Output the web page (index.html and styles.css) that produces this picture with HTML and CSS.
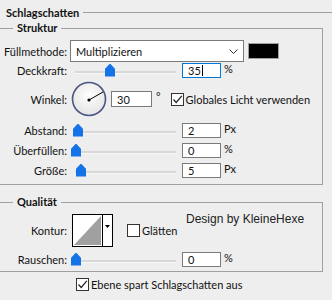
FILE: index.html
```
<!DOCTYPE html>
<html lang="de">
<head>
    <meta charset="UTF-8">
    <title>Schlagschatten</title>
    <link rel="stylesheet" href="styles.css">
</head>
<body>
    <div class="dialog">
        <div class="heading"><span>Schlagschatten</span></div>

        <fieldset class="group struktur">
            <legend>Struktur</legend>

            <div class="row row-mode">
                <span class="lbl">Füllmethode:</span>
                <div class="select">
                    <span>Multiplizieren</span>
                    <svg class="chevron" width="9" height="5" viewBox="0 0 9 5"><path d="M0.5 0.5 L4.5 4.5 L8.5 0.5" fill="none" stroke="#333" stroke-width="1"/></svg>
                </div>
                <span class="swatch"></span>
            </div>

            <div class="row">
                <span class="lbl">Deckkraft:</span>
                <div class="slider"><span class="thumb" style="left: 34px"></span></div>
                <span class="field focus">35<i class="caret"></i></span>
                <span class="unit">%</span>
            </div>

            <div class="row row-angle">
                <span class="lbl">Winkel:</span>
                <svg class="dial" width="38" height="36" viewBox="0 0 38 36">
                    <defs>
                        <radialGradient id="dialfill" cx="50%" cy="40%" r="60%">
                            <stop offset="0" stop-color="#ffffff"/>
                            <stop offset="1" stop-color="#e4e4e4"/>
                        </radialGradient>
                    </defs>
                    <circle cx="19" cy="18" r="16.5" fill="url(#dialfill)" stroke="#4c5682" stroke-width="1.6"/>
                    <line x1="19" y1="19" x2="33" y2="11" stroke="#000" stroke-width="1"/>
                    <circle cx="19" cy="19" r="1.6" fill="#000"/>
                </svg>
                <span class="field wide">30</span>
                <span class="unit deg">°</span>
                <span class="check on"><svg width="11" height="11" viewBox="0 0 11 11"><path d="M1.5 5.5 L4.2 8.5 L9.8 1.8" fill="none" stroke="#222" stroke-width="1.2"/></svg></span>
                <span class="check-text">Globales Licht verwenden</span>
            </div>

            <div class="row row-slider first">
                <span class="lbl">Abstand:</span>
                <div class="slider"><span class="thumb" style="left: 2px"></span></div>
                <span class="field">2</span>
                <span class="unit">Px</span>
            </div>

            <div class="row row-slider">
                <span class="lbl">Überfüllen:</span>
                <div class="slider"><span class="thumb" style="left: 0px"></span></div>
                <span class="field">0</span>
                <span class="unit">%</span>
            </div>

            <div class="row row-slider">
                <span class="lbl">Größe:</span>
                <div class="slider"><span class="thumb" style="left: 5px"></span></div>
                <span class="field">5</span>
                <span class="unit">Px</span>
            </div>
        </fieldset>

        <fieldset class="group qualitaet">
            <legend>Qualität</legend>
            <span class="credit">Design by KleineHexe</span>

            <div class="row row-contour">
                <span class="lbl">Kontur:</span>
                <svg class="contour" width="41" height="33" viewBox="0 0 41 33">
                    <rect x="0.5" y="0.5" width="40" height="32" fill="#fff" stroke="#000"/>
                    <polygon points="2,31 29,2 29,31" fill="#a0a0a0"/>
                    <line x1="30.5" y1="0.5" x2="30.5" y2="32.5" stroke="#000"/>
                    <polygon points="33,11 38,11 35.5,14" fill="#000"/>
                </svg>
                <span class="check"></span>
                <span class="check-text">Glätten</span>
            </div>

            <div class="row row-noise">
                <span class="lbl">Rauschen:</span>
                <div class="slider"><span class="thumb" style="left: 0px"></span></div>
                <span class="field">0</span>
                <span class="unit">%</span>
            </div>
        </fieldset>

        <div class="row row-bottom">
            <span class="check on"><svg width="11" height="11" viewBox="0 0 11 11"><path d="M1.5 5.5 L4.2 8.5 L9.8 1.8" fill="none" stroke="#222" stroke-width="1.2"/></svg></span>
            <span class="check-text">Ebene spart Schlagschatten aus</span>
        </div>
    </div>
</body>
</html>
```

FILE: styles.css
```
*{
    margin: 0;
    box-sizing: border-box;
}

body{
    background-color: #eeeeee;
    font-family: Lato, "Liberation Sans", sans-serif;
    font-size: 11px;
    color: #111;
    width: 332px;
    height: 300px;
    overflow: hidden;
}

.dialog{
    position: relative;
}

.heading{
    display: flex;
    align-items: center;
    height: 22px;
    padding: 3px 0 0 6px;
    font-weight: bold;
}

.heading::after{
    content: "";
    flex: 1;
    height: 1px;
    background-color: #a0a0a0;
    margin-left: 4px;
}

.group{
    position: relative;
    width: 324px;
    margin-left: -1px;
    border: 1px solid #a0a0a0;
    padding: 0;
}

.group legend{
    margin-left: 13px;
    padding: 0 4px;
    font-weight: bold;
    line-height: 12px;
}

.struktur{
    padding: 6px 0 6px 0;
}

.qualitaet{
    margin-top: 11px;
    padding: 6px 0 4px 0;
}

.row{
    display: flex;
    align-items: center;
    height: 16px;
}

.lbl{
    width: 67px;
    text-align: right;
    flex-shrink: 0;
}

/* Füllmethode */
.row-mode{
    height: 22px;
}

.select{
    display: flex;
    align-items: center;
    justify-content: space-between;
    width: 174px;
    height: 22px;
    margin-left: 3px;
    padding: 0 5px 0 5px;
    background-color: #fff;
    border: 1px solid #7a7a7a;
}

.swatch{
    width: 31px;
    height: 16px;
    margin-left: 4px;
    background-color: #000;
    border: 1px solid #a0a0a0;
}

/* slider */
.slider{
    position: relative;
    width: 105px;
    height: 13px;
    margin-left: 4px;
}

.slider::before{
    content: "";
    position: absolute;
    left: 4px;
    right: 0;
    top: 7px;
    height: 2px;
    background-color: #d8d8d8;
    border-bottom: 1px solid #f8f8f8;
}

.thumb{
    position: absolute;
    top: 0;
    width: 10px;
    height: 13px;
    background-color: #1473e6;
    clip-path: polygon(50% 0, 100% 40%, 100% 100%, 0 100%, 0 40%);
}

.field{
    display: flex;
    align-items: center;
    width: 39px;
    height: 15px;
    margin-left: 6px;
    padding-left: 5px;
    background-color: #fff;
    border: 1px solid #7a7a7a;
}

.field.focus{
    border-color: #0078d7;
}

.caret{
    width: 1px;
    height: 11px;
    background-color: #000;
    margin-left: 1px;
}

.unit{
    margin: -3px 0 0 3px;
}

/* Winkel */
.row-angle{
    height: 36px;
    margin-top: 3px;
}

.dial{
    margin-left: 3px;
}

.field.wide{
    width: 41px;
    height: 16px;
    margin-left: 3px;
}

.unit.deg{
    margin: -6px 0 0 4px;
}

.check{
    display: flex;
    align-items: center;
    justify-content: center;
    width: 13px;
    height: 13px;
    margin-left: 10px;
    background-color: #fff;
    border: 1px solid #333;
}

.check-text{
    margin-left: 2px;
}

.row-slider{
    margin-top: 4px;
}

.row-slider.first{
    margin-top: 5px;
}

/* Qualität */
.credit{
    position: absolute;
    left: 186px;
    top: 4px;
    font-family: "Liberation Sans", Arial, sans-serif;
    font-size: 12px;
    color: #222;
}

.row-contour{
    height: 33px;
}

.contour{
    margin-left: 5px;
}

.row-contour .check{
    margin-left: 14px;
}

.row-noise{
    margin-top: 4px;
}

.row-bottom{
    margin-top: 4px;
    padding-left: 66px;
}
```
